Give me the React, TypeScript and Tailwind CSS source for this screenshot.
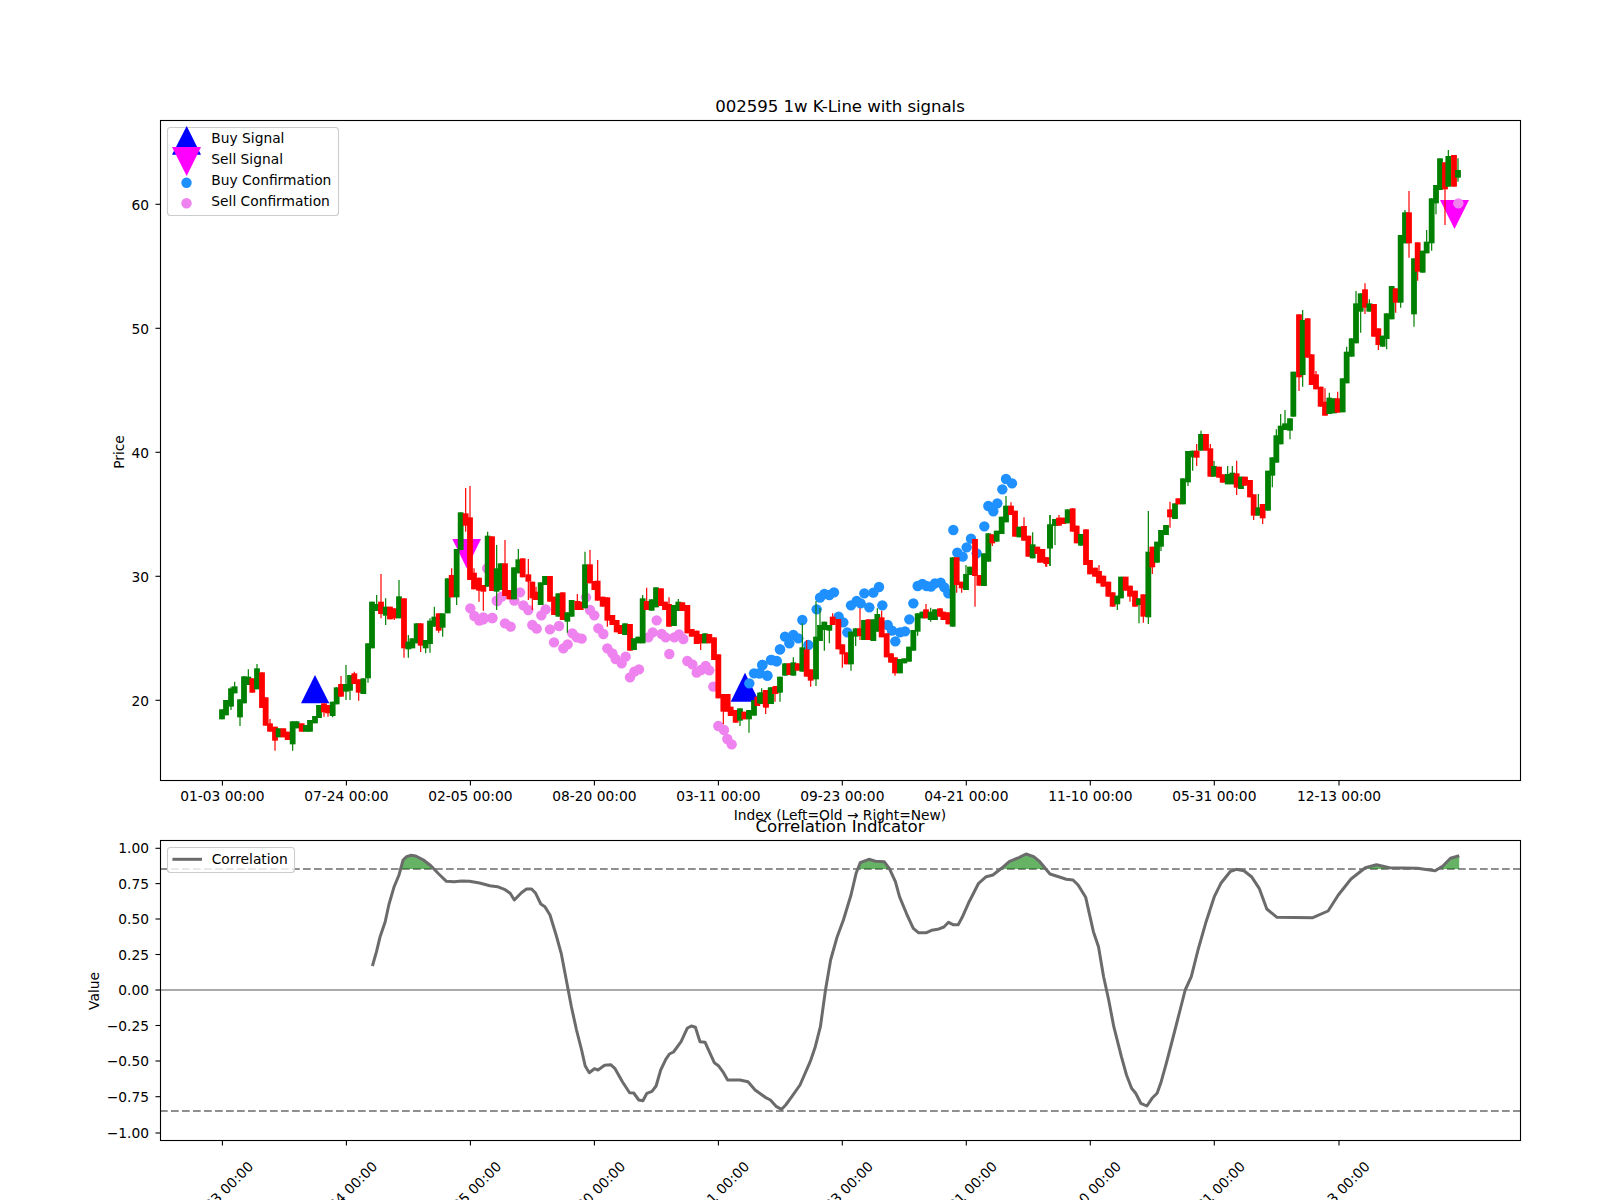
import React from "react";

type Row = number[];
const chunks: { x0: number; y0: number; rows: Row[] }[] = [
  {
    x0: 200,
    y0: 480,
    rows: [
      [66,1,688,718],[78,1,660,706],[93,1,625,680,620,690],[104,1,619,640,605],[120,1,658,712,0,738],[132,1,589,670],[145,1,590,615,568],[157,0,595,638],[171,1,565,628,552],[186,0,577,684],[197,0,652,737],[210,0,730,755,717],[225,0,740,782,0,812],[236,1,745,772],[250,0,745,772],[263,0,755,780],[278,1,724,793,0,812],[290,1,724,745],[305,0,730,755],[318,1,735,755],[330,1,720,755],[345,1,708,730],[357,1,675,714],[372,0,670,697,0,710],[384,0,675,700,0,710],[398,1,665,708,0,712],[410,1,622,673],[423,0,612,650,588],[438,1,612,635,555,660],[450,1,585,632,0,660],[463,0,580,612,575],[476,0,598,638,0,662],[490,1,595,642],[504,1,490,595,0,608],[516,1,365,505],[530,1,372,393,345],[543,0,365,402,282,415],[557,1,380,407,355,435],[570,0,380,418],[583,0,385,415,0,420],[597,1,349,415,300],[612,0,355,505,0,533],[625,1,485,508,465,533],[637,1,475,505],[650,1,430,490],[662,0,430,497,0,516],[677,1,480,505,0,520],[690,1,422,492,415,518],[703,1,410,440,380],[716,0,400,452,0,458],[728,1,400,443,0,470],[743,1,295,400],[755,0,285,352,265],[770,1,207,352,0,375],[782,1,97,210],[797,0,100,137,24,155],[810,0,112,300,18],[822,0,278,328,265],[837,0,293,332,0,365],[850,0,315,335,0,392],[863,1,167,320,155],[876,0,169,333],
    ],
  },
  {
    x0: 480,
    y0: 480,
    rows: [
      [50,1,265,335,195,390],[62,1,250,330],[75,0,250,348,180],[88,0,330,358],[102,1,262,358],[115,1,238,280,207],[128,0,235,292],[145,0,283,305,237,360],[157,0,305,355,0,390],[168,0,335,360,320],[182,1,307,375],[195,1,288,315],[210,0,288,365],[222,0,350,405],[235,1,340,410],[248,0,337,420],[262,1,397,425,0,458],[275,1,360,410],[292,0,363,390,342],[302,0,365,390],[315,1,253,385,215],[330,0,253,310,210],[343,0,303,330],[353,0,302,362,240],[368,0,350,380],[382,0,352,422,0,440],[397,0,405,435],[410,0,420,457],[422,0,435,462],[435,1,430,465],[450,0,432,512],[462,1,475,510],[475,1,470,490],[488,1,355,490,345],[500,0,363,390,323],[515,1,358,392],[528,1,322,382],[543,0,325,378],[555,0,365,390],[567,0,372,440,352],[582,1,375,438],[595,1,365,393,357],[607,0,367,393],[622,0,375,460],[635,0,447,470],[650,0,452,492],[662,0,462,490,0,510],[675,1,460,490],[688,0,462,490],[702,0,472,540],[715,0,523,655],[730,0,642,695,0,733],[743,0,642,695],[752,0,680,708],[767,0,690,728],[780,1,685,722,0,738],[793,0,695,718],[807,1,690,718,0,758],[822,1,660,707],[832,0,650,678],[845,1,637,672,625],[858,0,630,683],[873,1,622,672],[888,0,618,640],
    ],
  },
  {
    x0: 760,
    y0: 440,
    rows: [
      [0,1,758,790],[17,0,750,800,0,822],[32,1,743,792],[45,0,740,762,0,785],[60,1,710,758,0,785],[75,1,670,707],[88,0,670,705],[100,1,667,707,652],[113,0,670,692],[127,1,622,695,550],[140,0,628,710,600],[152,0,688,722,0,740],[168,1,590,718,483,738],[180,1,555,603,505],[193,1,545,570,0,632],[208,1,555,572,0,610],[218,0,530,555,520],[235,0,537,628],[247,0,613,643,0,683],[260,0,637,673],[273,1,575,673,0,692],[287,1,565,590,0,618],[300,0,565,588,505,600],[312,1,540,600],[325,0,538,600],[340,1,538,603],[352,1,522,575,505],[365,0,532,592,512],[380,0,580,652],[393,0,640,668],[405,0,652,700,0,707],[420,1,657,700],[433,1,655,670],[447,1,620,665],[460,1,570,632],[473,1,520,575,0,587],[487,1,515,535],[498,0,508,535,492],[512,1,515,540,503,545],[525,1,508,540],[540,0,505,530],[550,0,515,540],[565,0,517,553],[578,1,352,560],[590,0,352,435,0,458],[605,0,425,445,0,458],[618,1,402,450,375],[630,1,380,405],[645,0,297,408,0,500],[658,0,405,437],[672,1,340,438],[685,1,280,365],[697,0,283,310,0,318],[710,1,272,305],[725,1,230,282],[738,1,197,247,168],[753,0,197,225,187],[765,0,212,290],[778,1,260,292],[792,0,258,302,232],[805,0,287,350],[818,1,313,355,277],[832,0,320,342],[847,0,327,365],[860,0,352,372,0,380],[870,1,254,325,225,378],[885,1,237,257],
    ],
  },
  {
    x0: 1040,
    y0: 380,
    rows: [
      [0,0,508,548],[17,0,532,550,0,560],[30,1,433,505,405,558],[45,1,418,437,0,495],[57,0,413,437,405],[70,0,413,432],[83,1,388,430],[98,0,385,455],[110,0,437,490],[123,1,462,497],[138,0,448,555],[150,0,540,583],[165,0,563,590],[177,0,573,610,555],[190,0,587,620],[205,0,605,650],[218,0,637,680],[232,1,647,673,0,690],[243,1,590,655],[257,0,590,632],[270,0,617,650,0,665],[285,0,632,680],[297,1,655,675,0,730],[310,0,643,710,0,728],[325,1,515,712,393,732],[337,0,500,562,0,582],[351,1,485,548],[363,1,450,500,0,513],[378,1,435,465],[390,0,388,412,365,443],[405,1,370,417],[415,0,355,373],[429,1,295,373],[444,1,213,307,0,318],[458,1,212,232,0,272],[470,0,212,233,192,258],[483,1,162,212,152],[498,0,162,212],[511,0,205,290,192],[522,1,258,290,243],[537,0,260,293],[548,0,283,308],[563,1,282,313,258],[577,1,278,313,258],[590,0,280,323,242,345],[603,1,290,327],[615,0,290,317],[630,0,300,352],[641,0,343,407,0,420],[655,1,382,407,342],[668,0,372,415,0,432],[684,1,272,392],[697,1,232,287,0,322],[709,1,166,248,148],[722,1,137,193,102],[735,1,130,150,90],[750,1,115,152,0,178],
    ],
  },
  {
    x0: 1230,
    y0: 130,
    rows: [
      [190,1,725,860],[207,0,553,742,0,783],[218,1,570,735,540,770],[233,0,565,683],[245,0,673,765],[258,0,733,778,723],[272,0,770,830],[285,0,815,857,775],[298,1,803,852,788],[312,1,805,850],[323,0,805,848,785],[338,1,745,847],[350,1,665,760,650],[365,1,625,680],[378,1,520,640,483],[392,1,490,545,0,608],[405,0,478,533,460,552],[418,1,520,545,508],[432,0,522,620],[445,0,595,645,0,660],[458,1,617,650],[470,1,550,627,0,658],[485,1,468,568],[497,0,475,518,0,548],[512,1,315,518,0,533],[525,1,247,340,240],[537,0,247,340,183,383],[552,1,385,553,0,590],[563,0,337,425,0,452],[578,1,362,428],[590,1,335,370,300],[605,1,205,340,0,362],[618,1,165,220,0,253],[630,1,85,180],[645,0,97,178,0,285],[655,1,78,170,60],[672,0,75,170],[684,1,120,143,85,155],
    ],
  },
];

const candles = chunks.flatMap((c) =>
  c.rows.map((r) => ({
    x: c.x0 + r[0] / 3,
    green: r[1] === 1,
    top: c.y0 + r[2] / 3,
    bottom: c.y0 + r[3] / 3,
    wickTop: r[4] ? c.y0 + r[4] / 3 : c.y0 + r[2] / 3,
    wickBottom: r[5] ? c.y0 + r[5] / 3 : c.y0 + r[3] / 3,
  })),
);

const z = (x0: number, y0: number, pts: number[][]) => pts.map(([x, y]) => [x0 + x / 3, y0 + y / 3]);

const pink = [
  ...z(200, 480, [[811,385],[823,408],[838,422],[850,412],[877,414],[862,265],[890,362]]),
  ...z(480, 480, [[10,418],[37,414],[75,430],[92,440],[22,265],[52,363],[65,350],[103,362],[120,337],[130,376],[145,390],[184,406],[197,388],[157,435],[170,446],[210,448],[237,438],[222,487],[250,505],[263,493],[277,460],[290,472],[305,476],[318,352],[330,390],[343,406],[355,445],[370,462],[382,505],[397,520],[407,537],[425,550],[437,530],[450,592],[463,575],[477,568],[505,472],[518,457],[530,421],[545,462],[557,472],[568,522],[583,472],[597,463],[610,477],[622,543],[637,553],[650,578],[663,570],[677,558],[688,571],[700,620],[715,738],[732,750],[742,777],[755,793]]),
  ...z(1230, 130, [[685,220]]),
];

const blue = [
  ...z(480, 480, [[808,610],[822,580],[837,580],[847,555],[862,587],[875,540],[890,543],[900,508]]),
  ...z(760, 440, [[7,675],[0,700],[22,707],[33,660],[50,664],[60,628],[75,590],[88,610],[100,585],[115,595],[127,540],[145,615],[170,508],[180,473],[193,462],[208,465],[222,457],[236,530],[250,547],[262,577],[273,496],[290,483],[302,490],[313,460],[328,502],[340,458],[357,441],[367,496],[383,555],[396,572],[406,604],[420,577],[435,574],[448,538],[460,490],[473,438],[487,432],[500,438],[513,440],[525,430],[542,428],[553,442],[565,460],[580,270],[592,338],[608,350],[620,322],[633,296],[650,340],[673,259],[685,198],[700,214],[712,190],[727,148],[738,117],[756,130]]),
];

const lineA = [[730,558],[738,515],[745,470],[755,425],[762,375],[772,322],[782,285],[790,240],[797,230],[805,226],[815,228],[830,240],[845,258],[860,282],[875,304],[890,305],[905,303],[920,304],[940,309],[960,317],[975,320],[990,329],[1000,340],[1008,360],[1022,338],[1032,327],[1042,327],[1050,340],[1060,372],[1068,380],[1078,405],[1090,465],[1100,520],[1110,600],[1120,680],[1130,750],[1140,810],[1147,858],[1155,878],[1165,866],[1172,870],[1185,856],[1197,854],[1205,865],[1220,905],[1234,938],[1242,939],[1252,960],[1260,962],[1268,940],[1278,934],[1286,918],[1295,870],[1305,838],[1312,822],[1320,816],[1335,785],[1347,745],[1355,738],[1363,742],[1372,785],[1382,787],[1400,848],[1408,857],[1418,878],[1426,900],[1450,900],[1466,905],[1480,930],[1500,952],[1510,960],[1522,980],[1532,988],[1540,975],[1552,950]];
const lineB = [[0,915],[20,845],[30,800],[40,740],[50,630],[60,540],[73,470],[85,420],[100,345],[110,280],[118,248],[135,238],[148,244],[165,245],[175,265],[187,305],[195,350],[210,405],[222,445],[232,458],[248,458],[258,451],[270,448],[282,441],[291,427],[300,434],[310,434],[318,412],[330,370],[350,310],[365,290],[378,285],[395,265],[410,245],[430,232],[443,222],[458,230],[470,245],[490,282],[510,292],[522,298],[535,300],[545,315],[560,352],[575,455],[585,500],[595,590],[605,660],[615,740],[630,830],[640,885],[650,925],[658,940],[668,970],[680,978],[690,955],[700,940],[708,905],[718,850],[730,780],[745,690],[755,630],[767,590],[780,510],[795,430],[812,350],[825,310],[843,275],[855,268],[870,272],[885,290],[900,325],[915,387],[935,412],[1005,413],[1035,393],[1055,345],[1080,297],[1108,263],[1130,254],[1155,263],[1210,265],[1245,272],[1260,258],[1275,235],[1292,227]];
const corr = [
  ...lineA.map(([x, y]) => [x / 1.96, 780 + y / 3]),
  ...lineB.map(([x, y]) => [800 + x / 1.96, 780 + y / 3]),
];
const corrPts = corr.map(([x, y]) => `${x.toFixed(1)},${y.toFixed(1)}`).join(" ");
const fillPts = `${corr[0][0].toFixed(1)},869 ${corrPts} ${corr[corr.length - 1][0].toFixed(1)},869`;

const tickX = [222.4, 346.4, 470.4, 594.4, 718.4, 842.3, 966.3, 1090.3, 1214.3, 1339];
const tickLabels = ["01-03 00:00","07-24 00:00","02-05 00:00","08-20 00:00","03-11 00:00","09-23 00:00","04-21 00:00","11-10 00:00","05-31 00:00","12-13 00:00"];
const priceTicks = [[20,700.3],[30,576.3],[40,452.3],[50,328.3],[60,204.3]];
const valueTicks: [string, number][] = [["1.00",848.3],["0.75",883.6],["0.50",919],["0.25",954.5],["0.00",990],["−0.25",1025.5],["−0.50",1061],["−0.75",1096.7],["−1.00",1133]];

const tick = "text-[13.8px] fill-black";
const title = "text-[16.6px] tracking-[-0.06px] fill-black";

export default function App() {
  return (
    <div className="w-[1600px] h-[1200px] bg-white overflow-hidden flex flex-col font-['DejaVu_Sans',sans-serif]">
      <svg width="1600" height="816" viewBox="0 0 1600 816" className="block shrink-0 overflow-visible">
        <text x="840" y="112" textAnchor="middle" className={title}>002595 1w K-Line with signals</text>

        <polygon points="301,703.3 315,675 329.3,703.3" fill="#0000ff" />
        <polygon points="730.7,701.7 745,672.7 759.3,701.7" fill="#0000ff" />
        <polygon points="452.3,539 481,539 466.7,568.3" fill="#ff00ff" />
        <polygon points="1440,200 1469,200 1454.5,229" fill="#ff00ff" />

        {blue.map(([x, y], i) => <circle key={i} cx={x} cy={y} r="5.2" fill="#1e90ff" />)}
        {pink.map(([x, y], i) => <circle key={i} cx={x} cy={y} r="5.2" fill="#ee82ee" />)}

        {candles.map((c, i) => {
          const col = c.green ? "#008000" : "#ff0000";
          return (
            <g key={i}>
              <line x1={c.x} x2={c.x} y1={c.wickTop} y2={c.wickBottom} stroke={col} strokeWidth="1.2" />
              <rect x={c.x - 2.9} y={c.top} width="5.8" height={c.bottom - c.top} fill={col} />
            </g>
          );
        })}

        <rect x="160.5" y="120.5" width="1360" height="660" fill="none" stroke="#000" strokeWidth="1.1" />
        {tickX.map((x, i) => (
          <g key={i}>
            <line x1={x} x2={x} y1="781" y2="785.5" stroke="#000" strokeWidth="1.1" />
            <text x={x} y="801" textAnchor="middle" className={tick}>{tickLabels[i]}</text>
          </g>
        ))}
        {priceTicks.map(([v, y]) => (
          <g key={v}>
            <line x1="155.5" x2="160" y1={y} y2={y} stroke="#000" strokeWidth="1.1" />
            <text x="149" y={y + 5.5} textAnchor="end" className={tick}>{v}</text>
          </g>
        ))}
        <text x="840" y="820" textAnchor="middle" className={tick}>Index (Left=Old → Right=New)</text>
        <text transform="translate(124 452) rotate(-90)" textAnchor="middle" className={tick}>Price</text>

        <rect x="167.5" y="127.5" width="171" height="88" rx="3" fill="#fff" fillOpacity="0.8" stroke="#cccccc" strokeWidth="1.1" />
        <polygon points="172,154.7 186.7,126 201,154.7" fill="#0000ff" />
        <polygon points="172,147 201,147 186.7,176" fill="#ff00ff" />
        <circle cx="186.5" cy="182.7" r="5.2" fill="#1e90ff" />
        <circle cx="186.5" cy="203.3" r="5.2" fill="#ee82ee" />
        <text x="211.3" y="143.2" className={tick}>Buy Signal</text>
        <text x="211.3" y="164.2" className={tick}>Sell Signal</text>
        <text x="211.3" y="185.1" className={tick}>Buy Confirmation</text>
        <text x="211.3" y="206" className={tick}>Sell Confirmation</text>
      </svg>

      <svg width="1600" height="384" viewBox="0 816 1600 384" className="block shrink-0">
        <text x="840" y="831.7" textAnchor="middle" className={title}>Correlation Indicator</text>
        <defs>
          <clipPath id="above">
            <rect x="160" y="840" width="1360" height="29" />
          </clipPath>
        </defs>
        <line x1="160" x2="1520" y1="990" y2="990" stroke="#aaaaaa" strokeWidth="2" />
        <line x1="160" x2="1520" y1="869" y2="869" stroke="#8f8f8f" strokeWidth="2" strokeDasharray="7.7 3.3" />
        <line x1="160" x2="1520" y1="1111" y2="1111" stroke="#8f8f8f" strokeWidth="2" strokeDasharray="7.7 3.3" />
        <polygon points={fillPts} fill="#008000" fillOpacity="0.6" clipPath="url(#above)" />
        <polyline points={corrPts} fill="none" stroke="#6b6b6b" strokeWidth="3" strokeLinejoin="round" />

        <rect x="160.5" y="840.5" width="1360" height="300" fill="none" stroke="#000" strokeWidth="1.1" />
        {tickX.map((x, i) => (
          <g key={i}>
            <line x1={x} x2={x} y1="1141" y2="1145.5" stroke="#000" strokeWidth="1.1" />
            <text x={x + 2} y="1197" textAnchor="middle" transform={`rotate(-45 ${x + 2} 1197)`} className={tick}>{tickLabels[i]}</text>
          </g>
        ))}
        {valueTicks.map(([v, y]) => (
          <g key={v}>
            <line x1="155.5" x2="160" y1={y} y2={y} stroke="#000" strokeWidth="1.1" />
            <text x="149" y={y + 5} textAnchor="end" className={tick}>{v}</text>
          </g>
        ))}
        <text transform="translate(99 991) rotate(-90)" textAnchor="middle" className={tick}>Value</text>

        <rect x="167.5" y="847.5" width="127" height="25" rx="3" fill="#fff" fillOpacity="0.8" stroke="#cccccc" strokeWidth="1.1" />
        <line x1="172.4" x2="202" y1="859.3" y2="859.3" stroke="#6b6b6b" strokeWidth="3" />
        <text x="211.7" y="864.3" className={tick}>Correlation</text>
      </svg>
    </div>
  );
}
